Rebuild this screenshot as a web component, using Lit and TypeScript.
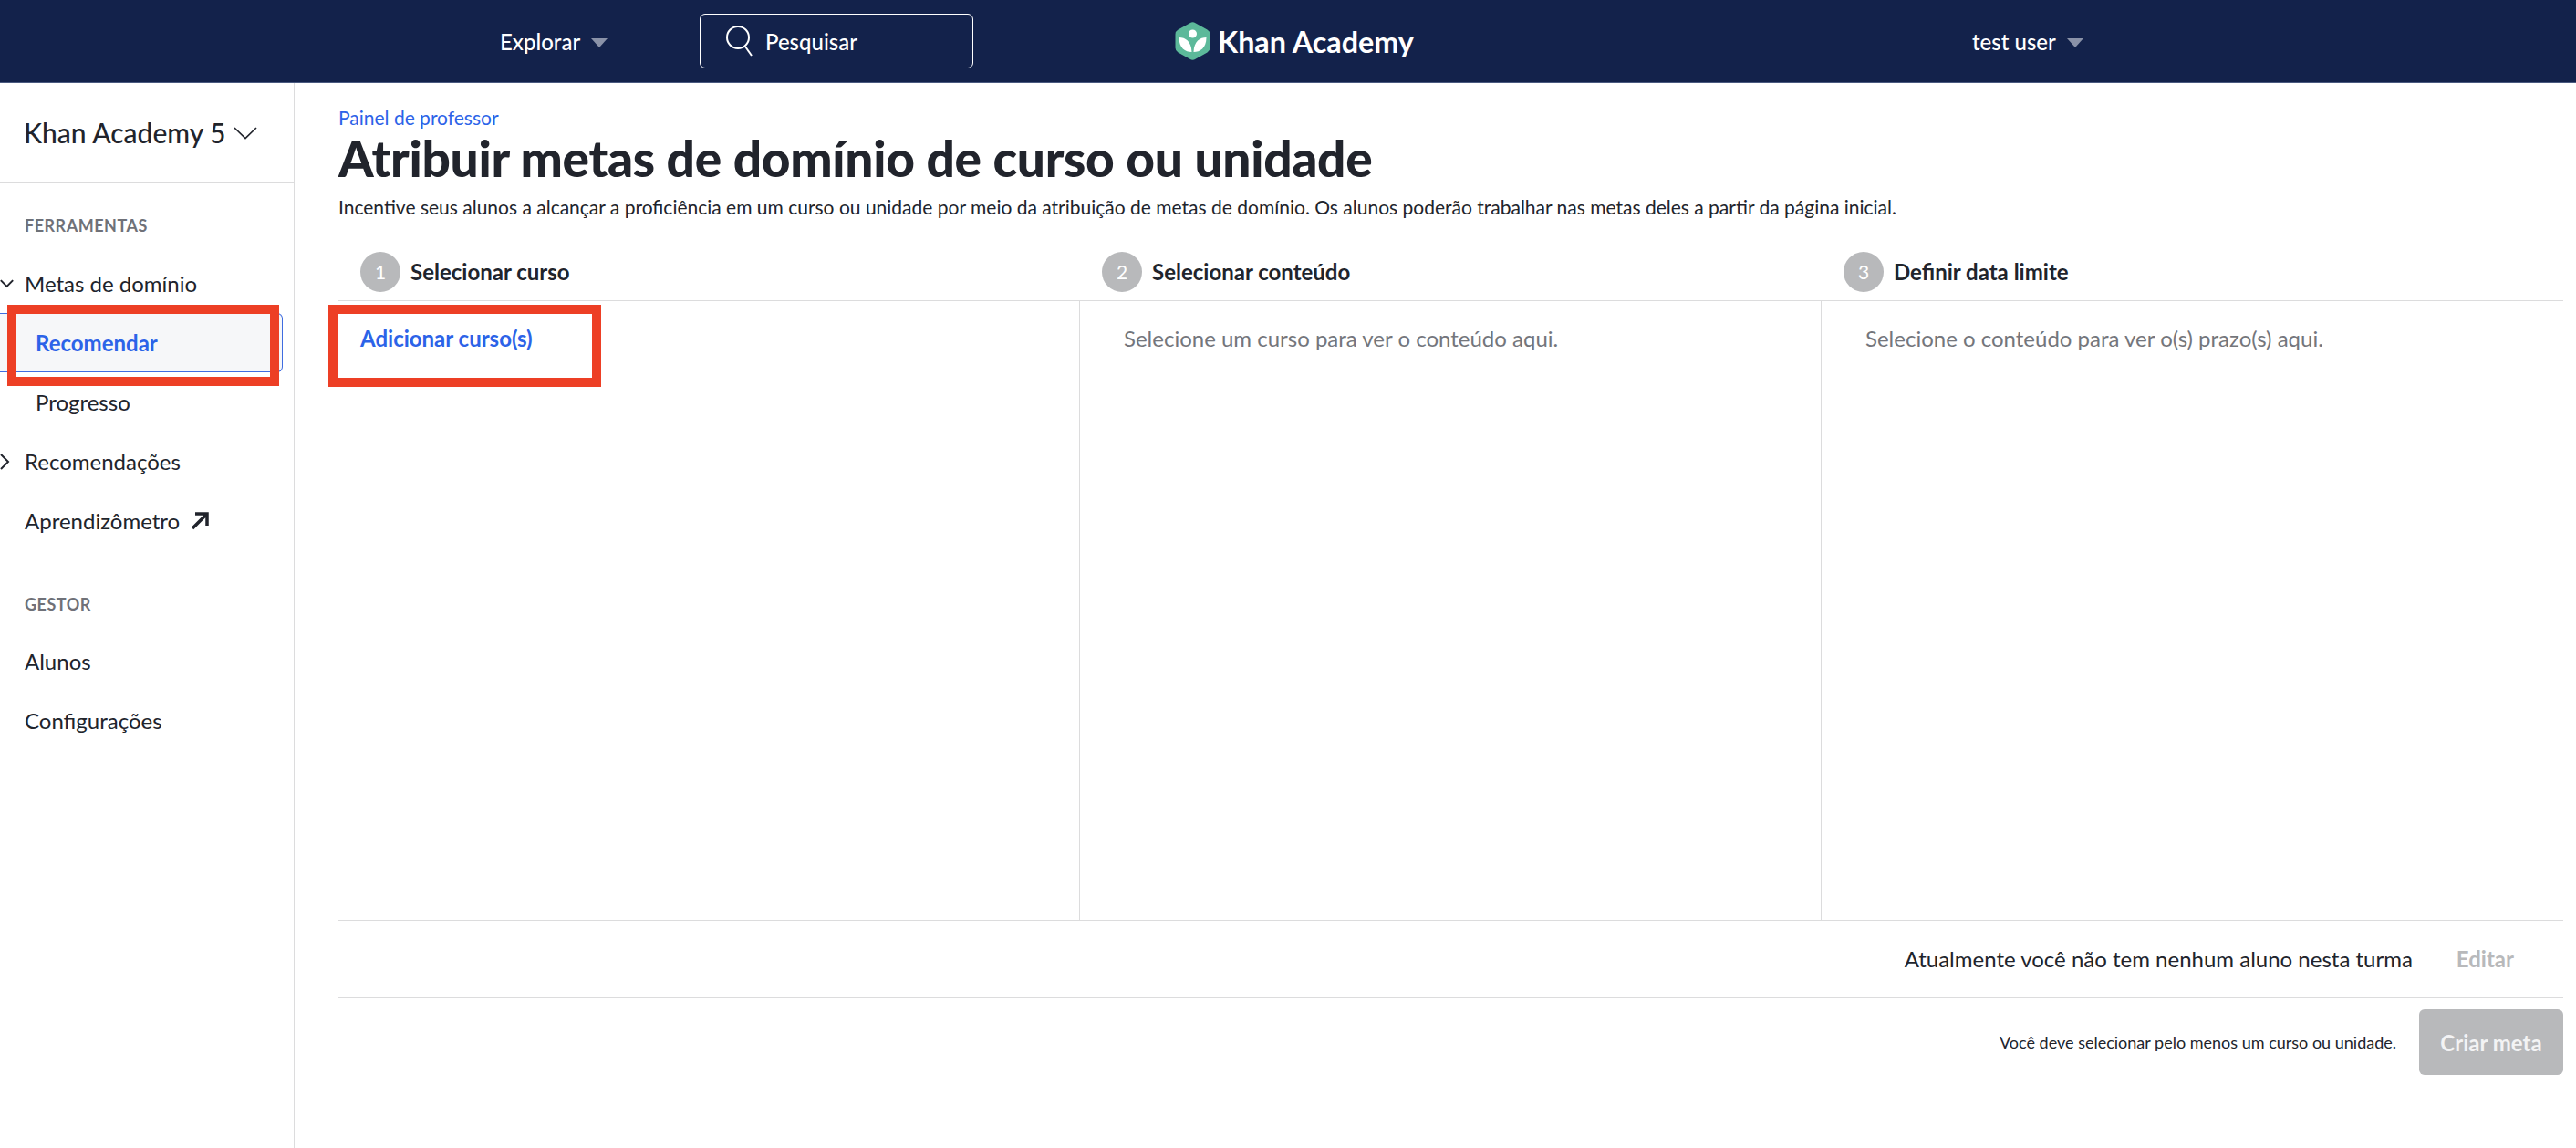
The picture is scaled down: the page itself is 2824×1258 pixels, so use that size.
import { LitElement, html, css } from "lit";
import { customElement } from "lit/decorators.js";

@customElement("app-root")
export class AppRoot extends LitElement {
  static styles = css`
    :host { display: block; position: relative; height: 1258px; overflow: hidden; background: #fff; font-family: Lato, "Liberation Sans", sans-serif; color: #21242c; }
    * { box-sizing: border-box; }
    .top { height: 91px; background: #13224b; border-bottom: 1px solid #4a5a80; display: flex; align-items: center; color: #fff; padding-left: 548px; font-size: 24px; font-weight: 500; }
    .caret { width: 0; height: 0; border-left: 9px solid transparent; border-right: 9px solid transparent; border-top: 10px solid #8a92a8; margin-left: 12px; margin-top: 3px; }
    .explore { display: flex; align-items: center; width: 219px; }
    .search { width: 300px; height: 60px; border: 1px solid #fff; border-radius: 6px; display: flex; align-items: center; padding-left: 27px; gap: 12px; }
    .search svg { display: block; }
    .logo { display: flex; align-items: center; gap: 8px; margin-left: 221px; width: 874px; font-size: 32.3px; font-weight: 700; }
    .logo svg { display: block; }
    .user { display: flex; align-items: center; }
    .body { display: flex; height: 1167px; }
    .side { width: 323px; flex: none; border-right: 1px solid #dcdcdd; }
    .cls { height: 109px; border-bottom: 1px solid #dcdcdd; display: flex; align-items: center; padding-left: 26px; font-size: 30px; font-weight: 500; gap: 8px; }
    .cls svg { display: block; margin-top: 2px; }
    .label { height: 78px; padding: 36px 0 0 27px; font-size: 18px; line-height: 22px; font-weight: 700; color: #6f7178; letter-spacing: .5px; }
    .gestor { margin-top: 26px; height: 63px; padding-top: 22px; }
    .row { height: 65px; display: flex; align-items: center; font-size: 24px; padding-left: 27px; position: relative; color: #21242c; gap: 12px; }
    .row .chev { position: absolute; left: 0; top: 0; bottom: 0; display: flex; align-items: center; }
    .sub { padding-left: 39px; }
    .active { width: 310px; background: #f6f7f9; border: 1px solid #3f6ce0; border-left: 0; border-radius: 0 6px 6px 0; color: #2c63e8; font-weight: 700; }
    .main { flex: 1; padding: 0 14px 0 48px; display: flex; flex-direction: column; }
    .crumb { margin-top: 26px; font-size: 21px; line-height: 24px; color: #2c63e8; height: 24px; }
    h1 { margin: 1px 0 0; font-size: 55px; line-height: 62px; font-weight: 900; height: 62px; letter-spacing: -0.3px; }
    .desc { font-size: 21px; line-height: 26px; margin-top: 10px; height: 26px; }
    .cols { display: flex; height: 743px; margin-top: 26px; border-bottom: 1px solid #dcdcdd; }
    .col { flex: 1 1 0; display: flex; flex-direction: column; }
    .col:nth-child(1), .col:nth-child(2) { flex: 0 0 813px; }
    .col:nth-child(1) .pane, .col:nth-child(2) .pane { border-right: 1px solid #dcdcdd; }
    .pane { flex: 1; }
    .head { height: 64px; padding: 0 0 0 24px; border-bottom: 1px solid #dcdcdd; display: flex; align-items: center; gap: 11px; font-size: 24px; font-weight: 700; }
    .num { width: 44px; height: 44px; border-radius: 50%; background: #b8b9bb; color: #fff; font-size: 21px; font-weight: 400; display: flex; align-items: center; justify-content: center; }
    .placeholder { padding: 26px 0 0 48px; font-size: 24px; line-height: 30px; color: #74767c; }
    .add { padding: 26px 0 0 24px; font-size: 24px; line-height: 30px; color: #2c63e8; font-weight: 700; }
    .students { height: 85px; border-bottom: 1px solid #dcdcdd; display: flex; align-items: center; justify-content: flex-end; font-size: 24px; padding: 0 54px 2px 0; }
    .students span + span { color: #b8b9bb; font-weight: 700; margin-left: 48px; }
    .cta { display: flex; justify-content: flex-end; align-items: center; margin-top: 12px; font-size: 18px; gap: 25px; }
    .btn { width: 158px; height: 72px; background: #b8b9bb; color: #f3f3f4; border-radius: 6px; font-size: 24px; font-weight: 700; display: flex; align-items: center; justify-content: center; }
    .mark { position: absolute; border: 10px solid #ed3f25; pointer-events: none; }
    .m1 { left: 8px; top: 334px; width: 298px; height: 89px; }
    .m2 { left: 360px; top: 334px; width: 299px; height: 90px; }
  `;

  private chevDown(w = 18, sw = 2) {
    return html`<svg width=${w} height=${w} viewBox="0 0 18 18" fill="none" stroke="#21242c" stroke-width=${sw}><path d="M1 5l8 8 8-8"/></svg>`;
  }

  render() {
    return html`
      <div class="top">
        <div class="explore">Explorar<span class="caret"></span></div>
        <div class="search">
          <svg width="32" height="36" viewBox="0 0 32 36" fill="none" stroke="#fff" stroke-width="2"><circle cx="14" cy="14" r="12"/><path d="M22 24l7 10"/></svg>
          <span>Pesquisar</span>
        </div>
        <div class="logo">
          <svg width="39" height="42" viewBox="0 0 39 42"><path d="M16.5 1.2a6 6 0 0 1 6 0l13 7.4a6 6 0 0 1 3 5v14.8a6 6 0 0 1-3 5l-13 7.4a6 6 0 0 1-6 0l-13-7.4a6 6 0 0 1-3-5V13.6a6 6 0 0 1 3-5z" fill="#5cb99a"/><circle cx="19.5" cy="13" r="4.5" fill="#fff"/><path d="M4.500 17c7 0 13.500 4 14 16-7 0-14-4-14-16zM34.500 17c-7 0-13.500 4-14 16 7 0 14-4 14-16z" fill="#fff"/></svg>
          <span>Khan Academy</span>
        </div>
        <div class="user">test user<span class="caret"></span></div>
      </div>
      <div class="body">
        <aside class="side">
          <div class="cls">Khan Academy 5 <svg width="26" height="14" viewBox="0 0 26 14" fill="none" stroke="#21242c" stroke-width="1.7"><path d="M1 1l12 11.500L25 1"/></svg></div>
          <div class="label">FERRAMENTAS</div>
          <div class="row"><span class="chev">${this.chevDown(15, 2.4)}</span>Metas de domínio</div>
          <div class="row sub active">Recomendar</div>
          <div class="row sub">Progresso</div>
          <div class="row"><span class="chev"><svg width="11" height="18" viewBox="0 0 11 18" fill="none" stroke="#21242c" stroke-width="2"><path d="M1 1l8 8-8 8"/></svg></span>Recomendações</div>
          <div class="row">Aprendizômetro <svg width="20" height="20" viewBox="0 0 20 20" fill="none" stroke="#21242c" stroke-width="3.5"><path d="M2 18L18 2M5 2h13v13"/></svg></div>
          <div class="label gestor">GESTOR</div>
          <div class="row">Alunos</div>
          <div class="row">Configurações</div>
        </aside>
        <main class="main">
          <div class="crumb">Painel de professor</div>
          <h1>Atribuir metas de domínio de curso ou unidade</h1>
          <div class="desc">Incentive seus alunos a alcançar a proficiência em um curso ou unidade por meio da atribuição de metas de domínio. Os alunos poderão trabalhar nas metas deles a partir da página inicial.</div>
          <div class="cols">
            <div class="col"><div class="head"><span class="num">1</span>Selecionar curso</div><div class="pane add">Adicionar curso(s)</div></div>
            <div class="col"><div class="head"><span class="num">2</span>Selecionar conteúdo</div><div class="pane placeholder">Selecione um curso para ver o conteúdo aqui.</div></div>
            <div class="col"><div class="head"><span class="num">3</span>Definir data limite</div><div class="pane placeholder">Selecione o conteúdo para ver o(s) prazo(s) aqui.</div></div>
          </div>
          <div class="students"><span>Atualmente você não tem nenhum aluno nesta turma</span><span>Editar</span></div>
          <div class="cta"><span>Você deve selecionar pelo menos um curso ou unidade.</span><div class="btn">Criar meta</div></div>
        </main>
      </div>
      <div class="mark m1"></div>
      <div class="mark m2"></div>
    `;
  }
}
